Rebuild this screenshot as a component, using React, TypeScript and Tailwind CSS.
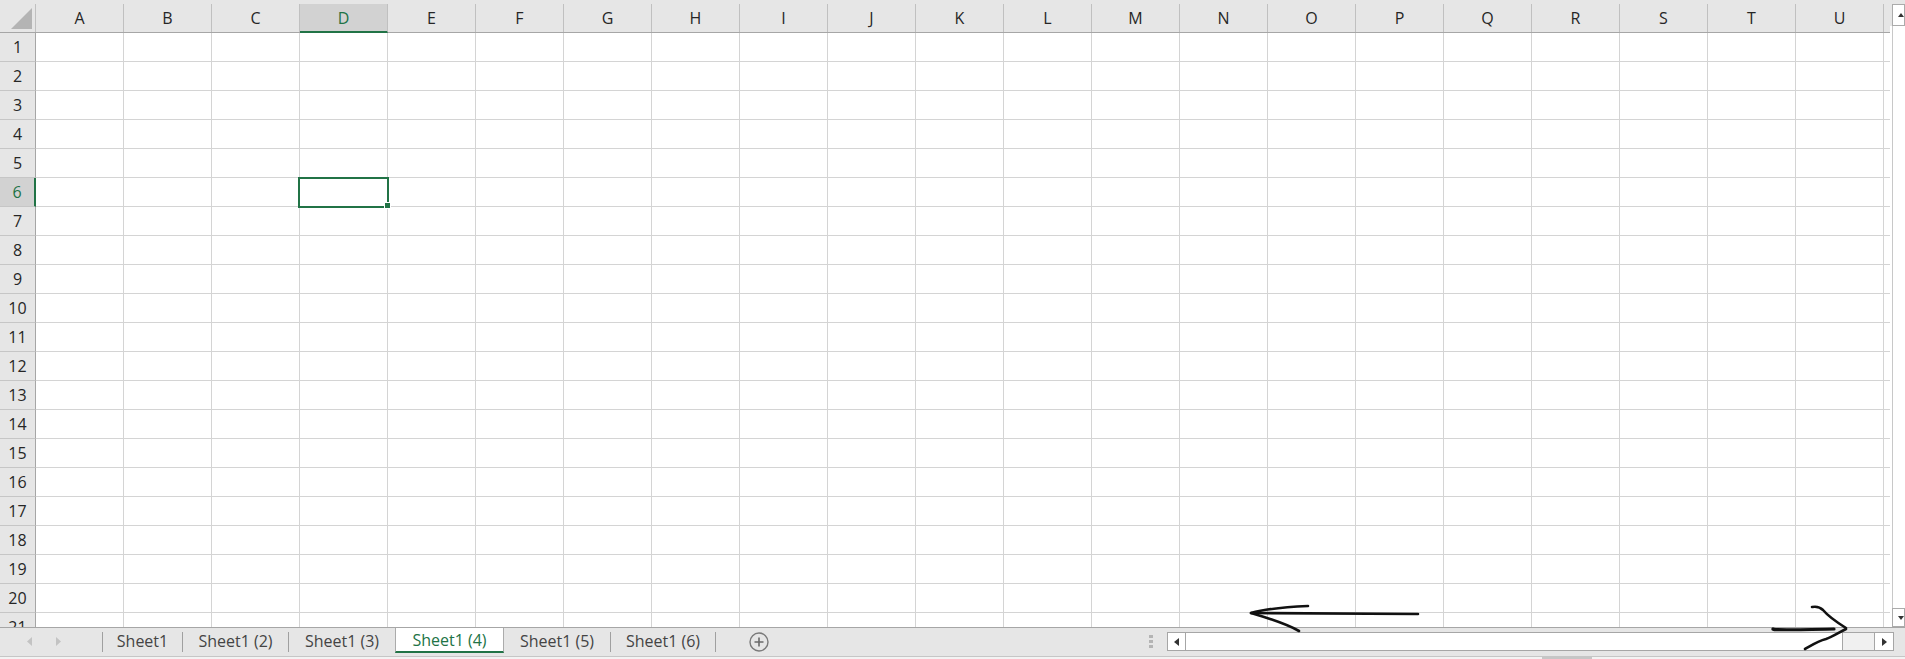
import React from "react";

const COLS = "ABCDEFGHIJKLMNOPQRSTU".split("");
const ROWS = Array.from({ length: 21 }, (_, i) => i + 1);

const SEL_COL = "D";
const SEL_ROW = 6;

type Tab = { name: string; width: string; active?: boolean };

const TABS: Tab[] = [
  { name: "Sheet1", width: "w-[79px]" },
  { name: "Sheet1 (2)", width: "w-[105px]" },
  { name: "Sheet1 (3)", width: "w-[106px]" },
  { name: "Sheet1 (4)", width: "w-[109px]", active: true },
  { name: "Sheet1 (5)", width: "w-[106px]" },
  { name: "Sheet1 (6)", width: "w-[104px]" },
];

function Sep() {
  return <div className="w-px h-[20px] mt-[4px] bg-[#a0a0a0] shrink-0" />;
}

function Grid() {
  return (
    <div className="relative w-[1894px] h-[627px] overflow-hidden bg-white">
      {/* column headers */}
      <div className="flex items-start h-[33px] pt-[4px] bg-[#e6e6e6] border-b border-[#a6a6a6]">
        <div className="relative w-[36px] h-[28px] border-r border-[#c0c0c0] shrink-0">
          <svg className="absolute left-[11px] top-[4px]" width="22" height="22" viewBox="0 0 22 22">
            <polygon points="21,0 21,21 0,21" fill="#b4b4b4" />
          </svg>
        </div>
        {COLS.map((c) =>
          c === SEL_COL ? (
            <div
              key={c}
              className="w-[88px] h-[29px] shrink-0 flex items-center justify-center bg-[#d2d2d2] border-r border-[#c0c0c0] border-b-2 border-b-[#217346] text-[#217346] pt-px"
            >
              {c}
            </div>
          ) : (
            <div
              key={c}
              className="w-[88px] h-[28px] shrink-0 flex items-center justify-center border-r border-[#c0c0c0] text-[#262626]"
            >
              {c}
            </div>
          )
        )}
        <div className="w-[10px] h-[28px] shrink-0" />
      </div>

      {/* rows */}
      {ROWS.map((r) => (
        <div key={r} className="flex h-[29px]">
          {r === SEL_ROW ? (
            <div className="w-[36px] h-[29px] shrink-0 flex items-center justify-center bg-[#d2d2d2] border-r-2 border-r-[#217346] border-b border-b-[#c6c6c6] text-[#217346]">
              {r}
            </div>
          ) : (
            <div className="w-[36px] h-[29px] shrink-0 flex items-center justify-center bg-[#e6e6e6] border-r border-r-[#a6a6a6] border-b border-b-[#c6c6c6] text-[#262626]">
              {r}
            </div>
          )}
          {COLS.map((c) => (
            <div key={c} className="w-[88px] h-[29px] shrink-0 border-r border-b border-[#d4d4d4]" />
          ))}
          <div className="w-[10px] h-[29px] shrink-0 border-r border-r-[#a6a6a6] border-b border-b-[#d4d4d4]" />
        </div>
      ))}

      {/* active cell */}
      <div className="absolute left-[298px] top-[177px] w-[91px] h-[31px] border-2 border-[#217346]" />
      <div className="absolute left-[384px] top-[202px] w-[7px] h-[7px] bg-[#217346] border border-white" />
    </div>
  );
}

function VScroll() {
  return (
    <div className="flex-1 h-[627px] flex flex-col bg-white">
      <div className="h-[4px] bg-[#e6e6e6]" />
      <div className="flex h-[22px]">
        <div className="w-[2px] bg-[#e6e6e6]" />
        <div className="flex-1 border border-[#ababab] bg-white flex items-center pl-[5px]">
          <svg width="6" height="4" viewBox="0 0 6 4">
            <polygon points="0,4 3,0 6,4" fill="#333" />
          </svg>
        </div>
      </div>
      <div className="flex-1 flex">
        <div className="w-[2px]" />
        <div className="flex-1 border-l border-[#c8c8c8]" />
      </div>
      <div className="flex h-[19px]">
        <div className="w-[2px]" />
        <div className="flex-1 border border-[#ababab] bg-white flex items-center pl-[5px]">
          <svg width="6" height="4" viewBox="0 0 6 4">
            <polygon points="0,0 6,0 3,4" fill="#333" />
          </svg>
        </div>
      </div>
    </div>
  );
}

function TabBar() {
  return (
    <div className="flex h-[29px] bg-[#e6e6e6] border-t border-[#a6a6a6]">
      {/* sheet navigation */}
      <div className="w-[102px] shrink-0 flex items-start pt-[9px] pl-[27px] gap-[24px]">
        <svg width="5" height="9" viewBox="0 0 5 9">
          <polygon points="5,0 5,9 0,4.5" fill="#c3c3c3" />
        </svg>
        <svg width="5" height="9" viewBox="0 0 5 9">
          <polygon points="0,0 0,9 5,4.5" fill="#c3c3c3" />
        </svg>
      </div>
      <Sep />
      {TABS.map((t, i) => {
        const next = TABS[i + 1];
        if (t.active) {
          return (
            <div
              key={t.name}
              className={`${t.width} h-[25px] shrink-0 flex items-center justify-center bg-white border-x border-[#ababab] border-b-2 border-b-[#217346] text-[#217346] pt-[1px]`}
            >
              {t.name}
            </div>
          );
        }
        return (
          <React.Fragment key={t.name}>
            <div className={`${t.width} h-[25px] shrink-0 flex items-center justify-center text-[#444444] pt-[1px]`}>
              {t.name}
            </div>
            {!(next && next.active) && <Sep />}
          </React.Fragment>
        );
      })}
      {/* new sheet */}
      <div className="ml-[33px] mt-[4px] w-[20px] h-[20px] shrink-0">
        <svg width="20" height="20" viewBox="0 0 20 20">
          <circle cx="10" cy="10" r="9" fill="none" stroke="#7a7a7a" strokeWidth="1.4" />
          <path d="M10 5.5v9M5.5 10h9" stroke="#6a6a6a" strokeWidth="1.6" />
        </svg>
      </div>

      <div className="flex-1" />

      {/* horizontal scroll */}
      <div className="w-[757px] shrink-0 flex items-start">
        <div className="w-[19px] flex flex-col gap-[2px] pt-[7px] pl-[1px]">
          <div className="w-[4px] h-[3px] bg-[#b4b4b4]" />
          <div className="w-[4px] h-[3px] bg-[#b4b4b4]" />
          <div className="w-[4px] h-[3px] bg-[#b4b4b4]" />
        </div>
        <div className="w-[727px] h-[19px] mt-[4px] flex border border-[#a6a6a6] bg-[#f0f0f0]">
          <div className="w-[18px] h-full flex items-center justify-center bg-white border-r border-[#a6a6a6]">
            <svg width="5" height="8" viewBox="0 0 5 8">
              <polygon points="5,0 5,8 0,4" fill="#333" />
            </svg>
          </div>
          <div className="w-[657px] h-full bg-white border-r border-[#a6a6a6]" />
          <div className="flex-1" />
          <div className="w-[19px] h-full flex items-center justify-center bg-white border-l border-[#a6a6a6]">
            <svg width="5" height="8" viewBox="0 0 5 8">
              <polygon points="0,0 0,8 5,4" fill="#333" />
            </svg>
          </div>
        </div>
      </div>
    </div>
  );
}

function Annotations() {
  return (
    <svg className="absolute left-0 top-0 pointer-events-none" width="1905" height="659" viewBox="0 0 1905 659">
      <g fill="none" stroke="#111" strokeWidth="2.6" strokeLinecap="round" strokeLinejoin="round">
        {/* left arrow */}
        <path d="M1418 614 L1252 613" />
        <path d="M1308 606 C1285 607 1265 609 1251 613" />
        <path d="M1251 613 C1268 618 1285 623 1299 631" />
        {/* right arrow */}
        <path d="M1773 629 C1772 630 1790 630 1834 629" strokeWidth="3.2" />
        <path d="M1812 607 C1817 606 1820 607 1823 610 C1828 616 1838 623 1846 628" />
        <path d="M1846 629 C1838 633 1832 637 1826 639 C1818 641 1812 645 1805 649" />
      </g>
    </svg>
  );
}

export default function App() {
  return (
    <div className="relative w-[1905px] h-[659px] overflow-hidden bg-white font-['Open_Sans',sans-serif] text-[16px] leading-none select-none">
      <div className="flex">
        <Grid />
        <VScroll />
      </div>
      <TabBar />
      <div className="flex h-[3px] border-t border-[#c6c6c6] bg-[#f3f3f3]">
        <div className="w-[1542px]" />
        <div className="w-[50px] h-full bg-[#c6c6c6]" />
      </div>
      <Annotations />
    </div>
  );
}
